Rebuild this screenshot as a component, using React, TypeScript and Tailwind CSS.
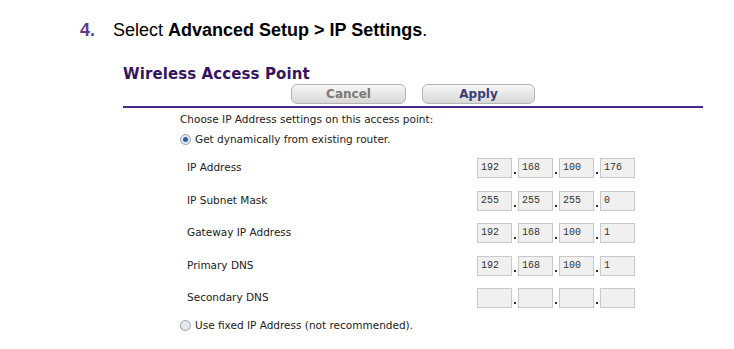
import React from "react";

const rows: { label: string; vals: string[] }[] = [
  { label: "IP Address", vals: ["192", "168", "100", "176"] },
  { label: "IP Subnet Mask", vals: ["255", "255", "255", "0"] },
  { label: "Gateway IP Address", vals: ["192", "168", "100", "1"] },
  { label: "Primary DNS", vals: ["192", "168", "100", "1"] },
  { label: "Secondary DNS", vals: ["", "", "", ""] },
];

function Box({ v }: { v: string }) {
  return (
    <div className="w-[35px] h-[20px] border border-[#c9c9c9] bg-[#f0f0f0] text-[10px] leading-[18px] pl-[3px] text-[#333] [font-family:'Liberation_Mono',monospace]">
      {v}
    </div>
  );
}

function Radio({ checked }: { checked: boolean }) {
  return (
    <div className="w-[11px] h-[11px] rounded-full border border-[#9aa3ad] bg-[#e4e8ec] flex items-center justify-center">
      {checked && <div className="w-[5px] h-[5px] rounded-full bg-[#2e5f9e]" />}
    </div>
  );
}

export default function App() {
  return (
    <div className="w-[734px] h-[349px] bg-white overflow-hidden relative">
      <div className="pt-[20px] pl-[80px] flex items-center text-[18px] leading-[20px] [font-family:'Liberation_Sans',Arial,sans-serif] text-black">
        <span className="font-bold text-[#5d3a8e] w-[33px]">4.</span>
        <span>
          Select <b>Advanced Setup &gt; IP Settings</b>.
        </span>
      </div>
      <div className="ml-[123px] mt-[25px] w-[580px] [font-family:'DejaVu_Sans',Verdana,sans-serif]">
        <div className="text-[15px] leading-[18px] font-bold text-[#34145f] tracking-[0.1px]">
          Wireless Access Point
        </div>
        <div className="flex gap-[16px] ml-[168px] mt-[1px]">
          <div className="w-[115px] h-[20px] rounded-[6px] border border-[#b5b5b5] bg-gradient-to-b from-[#f7f7f7] to-[#d8d8d6] text-center text-[12px] leading-[18px] font-bold text-[#7a7a7a]">
            Cancel
          </div>
          <div className="w-[113px] h-[20px] rounded-[6px] border border-[#b5b5b5] bg-gradient-to-b from-[#f7f7f7] to-[#d8d8d6] text-center text-[12px] leading-[18px] font-bold text-[#3b3b78]">
            Apply
          </div>
        </div>
        <div className="h-[2px] bg-[#4a2a88] mt-[2px]" />
        <div className="pl-[57px] text-[10.5px] text-[#222]">
          <div className="mt-[4px] leading-[14px]">Choose IP Address settings on this access point:</div>
          <div className="mt-[6px] flex items-center gap-[4px] leading-[14px]">
            <Radio checked />
            <span>Get dynamically from existing router.</span>
          </div>
          <div className="mt-[12px] flex flex-col gap-[12.5px]">
            {rows.map((r) => (
              <div key={r.label} className="flex items-center h-[20px]">
                <div className="w-[297px] pl-[7px]">{r.label}</div>
                <div className="flex items-stretch">
                  {r.vals.map((v, i) => (
                    <React.Fragment key={i}>
                      {i > 0 && (
                        <div className="w-[6px] flex justify-center items-end pb-[4px]">
                          <div className="w-[2px] h-[2px] bg-[#333]" />
                        </div>
                      )}
                      <Box v={v} />
                    </React.Fragment>
                  ))}
                </div>
              </div>
            ))}
          </div>
          <div className="mt-[10px] flex items-center gap-[4px] leading-[14px]">
            <Radio checked={false} />
            <span>Use fixed IP Address (not recommended).</span>
          </div>
        </div>
      </div>
    </div>
  );
}
